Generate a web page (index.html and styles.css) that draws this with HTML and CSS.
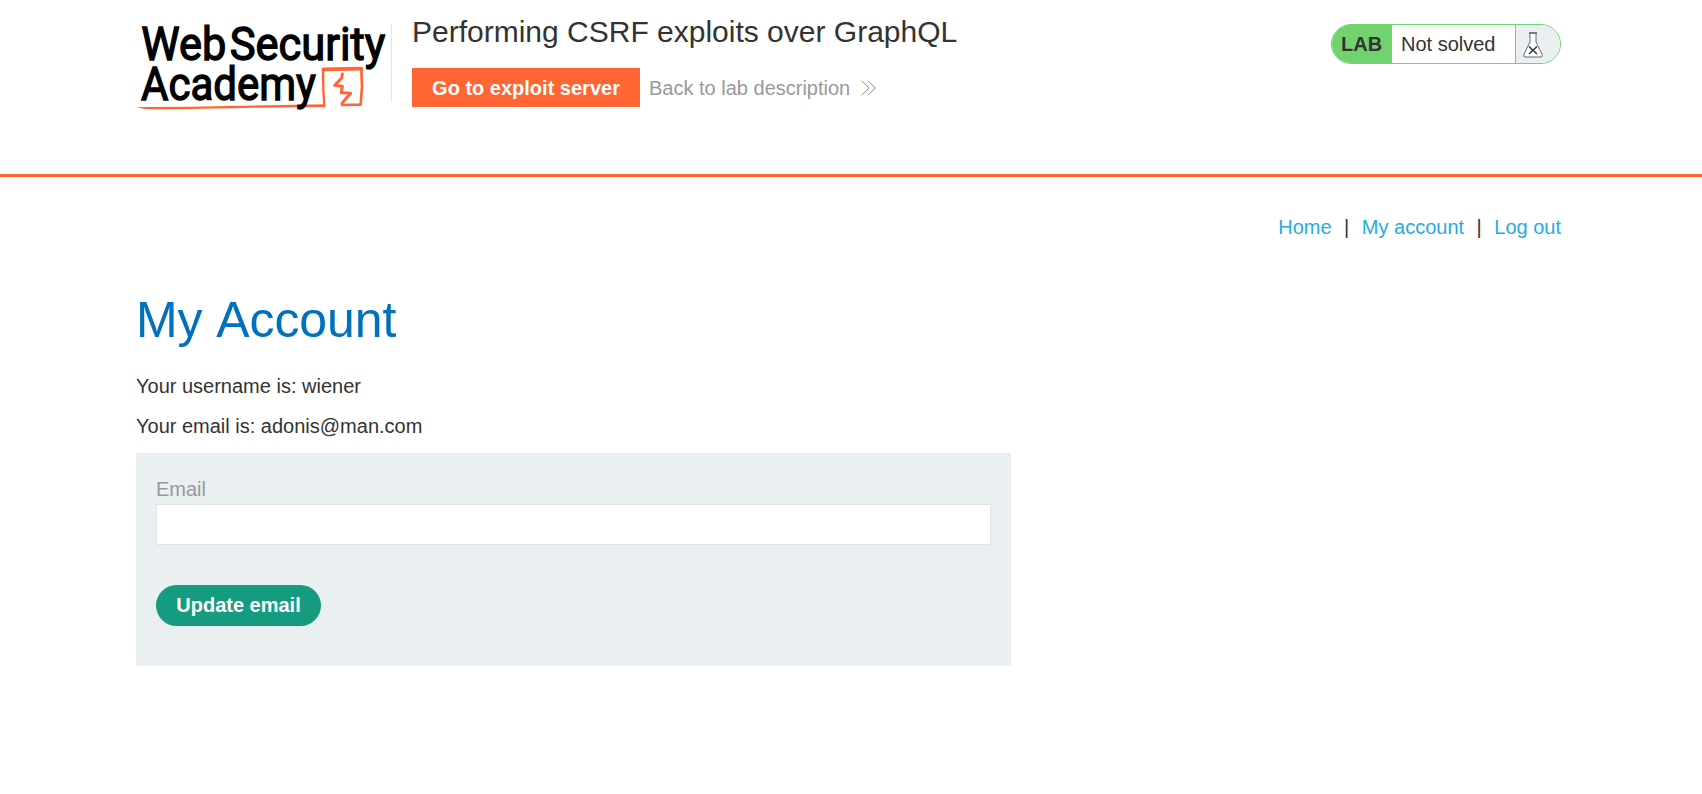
FILE: index.html
```html
<!DOCTYPE html>
<html lang="en">
<head>
<meta charset="utf-8">
<title>Performing CSRF exploits over GraphQL</title>
<link rel="stylesheet" href="styles.css">
</head>
<body>
<header class="lab-header">
  <svg class="logo" viewBox="18 0 768 330" role="img" aria-label="Web Security Academy">
    <path class="underline" d="M20 291Q90 290 180 290L582 283V291L380 293 180 297Q90 299 40 296Z"/>
    <path class="ink" stroke-width="7" d="M583 288 L580 240 L579 179"/>
    <path class="ink" stroke-width="11" d="M580 178 L694 176"/>
    <path class="ink" stroke-width="8" d="M694 176 L696 230 L692 284 L636 285"/>
    <path class="ink" stroke-width="9" d="M637 192 L635 204 L614 226 L637 229 L634 248 L662 250 L636 280"/>
    <text class="logo-text" x="34" y="149" textLength="255" lengthAdjust="spacingAndGlyphs">Web</text>
    <text class="logo-text" x="299" y="149" textLength="467" lengthAdjust="spacingAndGlyphs">Security</text>
    <text class="logo-text" x="33" y="271" textLength="525" lengthAdjust="spacingAndGlyphs">Academy</text>
  </svg>
  <div class="title-block">
    <h2 class="title">Performing CSRF exploits over GraphQL</h2>
    <div class="links">
      <a class="exploit-button">Go to exploit server</a>
      <a class="back-link">Back to lab description
        <svg class="chevrons" viewBox="0 0 15 16"><path d="M.7.7 8 8 .7 15.3M7 .7 14.3 8 7 15.3"/></svg>
      </a>
    </div>
  </div>
  <div class="status">
    <span class="status-tag">LAB</span>
    <span class="status-text">Not solved</span>
    <span class="status-icon">
      <svg class="flask" viewBox="0 0 20 26">
        <path class="glass" d="M7 1.500V10L.8 22.500Q.2 25 2 25H18Q19.800 25 19.200 22.500L13 10V1.500"/>
        <path class="rim" d="M6 1H14"/>
        <path class="cross" d="M6 14.500 14 22M14 14.500 6 22"/>
      </svg>
    </span>
  </div>
</header>
<main class="page">
  <nav class="nav"><a>Home</a><span class="bar">|</span><a>My account</a><span class="bar">|</span><a>Log out</a></nav>
  <h1 class="heading">My Account</h1>
  <p class="detail">Your username is: wiener</p>
  <p class="detail">Your email is: adonis@man.com</p>
  <form class="email-form">
    <label class="label" for="email">Email</label>
    <input class="input" id="email" type="email">
    <button class="submit" type="button">Update email</button>
  </form>
</main>
</body>
</html>
```
FILE: styles.css
```css
* { box-sizing: border-box; }
body {
  margin: 0;
  background: #fff;
  color: #333332;
  font: 20px/24px "Liberation Sans", Arial, sans-serif;
}
.lab-header {
  display: flex;
  align-items: flex-start;
  height: 177px;
  padding: 10px 141px 0 136px;
  border-bottom: 3px solid #ff6633;
}
.logo { width: 256px; height: 110px; flex: none; overflow: visible; }
.logo-text { font: 400 140px Roboto, sans-serif; fill: #000; stroke: #000; stroke-width: 4; }
.ink { fill: none; stroke: #ff6633; stroke-linejoin: round; stroke-linecap: round; }
.underline { fill: #ff6633; }
.title-block {
  height: 78px;
  margin-top: 14px;
  margin-left: -1px;
  padding-left: 20px;
  border-left: 1px solid #e3e3e3;
}
.title { margin: -10px 0 0; font-size: 30px; line-height: 36px; font-weight: 400; white-space: nowrap; }
.links { display: flex; align-items: center; gap: 9px; margin-top: 18px; }
.exploit-button {
  width: 228px;
  height: 39px;
  background: #ff6633;
  color: #fff;
  font-weight: 700;
  line-height: 40px;
  text-align: center;
}
.back-link { display: flex; align-items: center; gap: 11px; color: #999; }
.chevrons { width: 15px; height: 16px; fill: none; stroke: #888; stroke-width: 1; }
.status {
  display: flex;
  width: 230px;
  height: 40px;
  margin-top: 14px;
  margin-left: auto;
  overflow: hidden;
  border: 1px solid #70d36d;
  border-radius: 20px;
  line-height: 38px;
}
.status-tag { width: 60px; padding-left: 9px; background: #70d36d; font-weight: 700; }
.status-text { flex: 1; padding-left: 9px; }
.status-icon { width: 45px; padding: 7px 0 0 7px; border-left: 1px solid #70d36d; background: #eaeff2; }
.flask { display: block; width: 20px; height: 26px; }
.glass { fill: #fff; stroke: #666; stroke-width: 1; }
.rim { stroke: #555; stroke-width: 1.500; }
.cross { stroke: #333; stroke-width: 1.500; }
.page { padding: 38px 141px 0 136px; }
.nav { display: flex; justify-content: flex-end; color: #29abe2; }
.bar { margin: 0 12.500px; color: #333332; }
.heading {
  margin: 51px 0 0;
  color: #0071bc;
  font-size: 50px;
  line-height: 60px;
  font-weight: 400;
  font-kerning: none;
  letter-spacing: -.1px;
}
.detail { margin: 0; padding-top: 16px; }
.heading + .detail { margin-top: 8px; }
.email-form {
  display: flex;
  flex-direction: column;
  align-items: flex-start;
  width: 875px;
  height: 213px;
  margin-top: 15px;
  padding: 24px 20px;
  background: #eaeff2;
}
.label { color: #999; }
.input { width: 100%; height: 41px; margin: 3px 0 0; border: 1px solid #e3e3e3; background: #fff; }
.submit {
  width: 165px;
  height: 41px;
  margin: 40px 0 0;
  padding: 0;
  border: 0;
  border-radius: 21px;
  background: #159c80;
  color: #fff;
  font: 700 20px/39px "Liberation Sans", Arial, sans-serif;
}
```
